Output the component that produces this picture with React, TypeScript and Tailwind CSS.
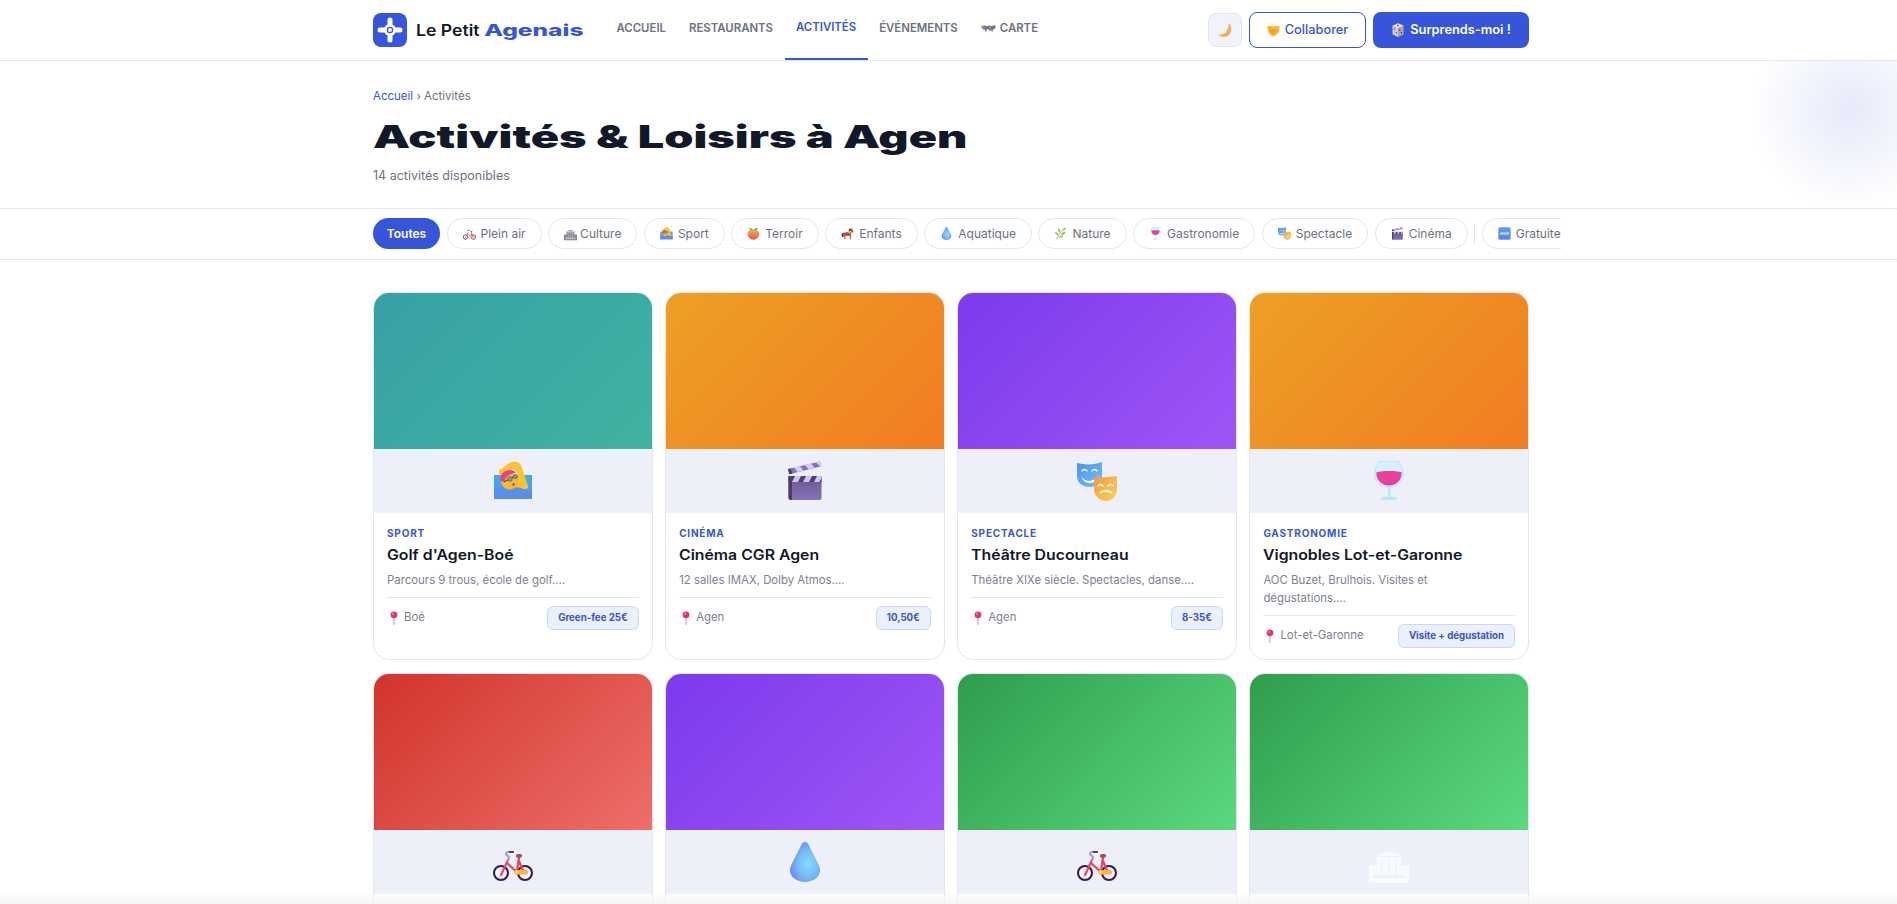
import React from "react";

const BLUE = "#3755db";

function Swimmer({ s }: { s: number }) {
  return (
    <svg width={s} height={s} viewBox="0 0 40 40">
      <defs>
        <linearGradient id="swW" x1="0" y1="0" x2="0" y2="1">
          <stop offset="0" stopColor="#3fa9f5" />
          <stop offset="1" stopColor="#4f9bf0" />
        </linearGradient>
      </defs>
      <rect x="1" y="14" width="38" height="24" fill="url(#swW)" />
      <path d="M6 9c1-1 3-1 5-3 4-4 8-6 13-5 3 1 4 3 5 6l6 18c1 2-1 3-2 3H22l3-8c0-5-1-11-5-12-3 0-6 3-8 6-2 1-5 0-6-1z" fill="#f9c22e" />
      <circle cx="16.500" cy="20" r="8.500" fill="#f8b92c" />
      <path d="M8 20c-2-6 3-11 9-11 3 0 5 1 6 3-5 0-10 3-12 9z" fill="#e6447e" />
      <path d="M11 21l13-7" stroke="#46566e" strokeWidth="1.400" />
      <circle cx="17" cy="18" r="2.200" fill="#8ba0b8" stroke="#46566e" strokeWidth="0.800" />
      <circle cx="22.300" cy="15.500" r="1.900" fill="#8ba0b8" stroke="#46566e" strokeWidth="0.800" />
      <circle cx="20.500" cy="23.500" r="1.200" fill="#c9303a" />
      <path d="M1 28c3-2 6-2 9 0s7 2 10 0 7-2 10 0 6 2 9 0v10H1z" fill="#5a8eea" />
    </svg>
  );
}

function Clapper({ s }: { s: number }) {
  return (
    <svg width={s} height={s} viewBox="0 0 40 40">
      <defs>
        <linearGradient id="clB" x1="0" y1="0" x2="0" y2="1">
          <stop offset="0" stopColor="#6a5688" />
          <stop offset="1" stopColor="#8573bd" />
        </linearGradient>
      </defs>
      <rect x="3.500" y="15" width="33" height="24" rx="2.500" fill="url(#clB)" />
      <path d="M3.500 15H7v24H6a2.500 2.500 0 0 1-2.500-2.500z" fill="#4c3a6a" />
      <rect x="3.500" y="15" width="33" height="6" fill="#4f3f72" />
      <path d="M10 15h6l-3 6H7zM21 15h6l-3 6h-6zM32 15h4.500v2l-2 4H29z" fill="#cfc4f5" />
      <path d="M3 8l32-7.500 1.300 4.700-32 8z" fill="#8b6cbd" />
      <path d="M9 6.600l6-1.400 3.500 4.200-6 1.500zM20 4l6-1.400 3.500 4.200-6 1.500zM31 1.400l4-.900 1.300 4.700-1.300.3z" fill="#d8cdf5" />
      <path d="M3 8l1.300 5.200L7.500 12.400 5.500 7.400z" fill="#4c3a6a" />
    </svg>
  );
}

function Masks({ s }: { s: number }) {
  return (
    <svg width={s} height={s} viewBox="0 0 40 40">
      <defs>
        <linearGradient id="mkB" x1="0" y1="0" x2="1" y2="1">
          <stop offset="0" stopColor="#4c8ff5" />
          <stop offset="1" stopColor="#6fc4fb" />
        </linearGradient>
        <linearGradient id="mkO" x1="0" y1="0" x2="1" y2="1">
          <stop offset="0" stopColor="#f29a45" />
          <stop offset="1" stopColor="#fcd24f" />
        </linearGradient>
      </defs>
      <path d="M0 2c8 2 17 2 25-1v14c0 7-5 11-12 11S0 22 0 15z" fill="url(#mkB)" />
      <path d="M3 13c3 9 15 9 19 0-2 5-3 9-9 9s-8-4-10-9z" fill="#fff" />
      <path d="M5 10c1-2 4-2 5 0M15 10c1-2 4-2 5 0" stroke="#fff" strokeWidth="1.400" fill="none" strokeLinecap="round" />
      <path d="M17 16c7 1 15 0 23-1v13c0 7-5 12-11 12s-12-5-12-12z" fill="url(#mkO)" />
      <path d="M22 33c2-5 11-6 14 0-4-2.500-10-2.500-14 0z" fill="#fff" />
      <path d="M21 25c1-2 4-2 5 0M31 25c1-2 4-2 5 0" stroke="#fff" strokeWidth="1.400" fill="none" strokeLinecap="round" />
    </svg>
  );
}

function Wine({ s }: { s: number }) {
  return (
    <svg width={s} height={s} viewBox="0 0 40 40">
      <path d="M11 0h18c4 5 5 9 5 13 0 8-6 13-14 13S6 21 6 13c0-4 1-8 5-13z" fill="#d5f0ff" stroke="#aee0f8" strokeWidth="1" />
      <path d="M7.500 11c7-1.500 18-1.500 25 0 1 8-5.500 13.500-12.500 13.500S6.500 19 7.500 11z" fill="#e93f9f" />
      <path d="M11 21c5 3.500 13 3.500 18 0-4 4-14 4-18 0z" fill="#8e3b9b" />
      <rect x="19" y="26" width="2.500" height="10" fill="#b9e4fa" />
      <rect x="12" y="36" width="16" height="3" rx="1.500" fill="#b9e4fa" />
    </svg>
  );
}

function Bike({ s }: { s: number }) {
  return (
    <svg width={s} height={s} viewBox="0 0 40 40">
      <circle cx="8" cy="31" r="7" fill="#fbeefa" stroke="#2d1a52" strokeWidth="2" />
      <circle cx="32" cy="31" r="7" fill="#fbeefa" stroke="#2d1a52" strokeWidth="2" />
      <path d="M8 33l7-15M14 21l10 9 2-15M26 19l5 12" stroke="#e8455b" strokeWidth="2.200" fill="none" strokeLinecap="round" />
      <path d="M15 18l1-2c1-2-3-2-3-4s1-2 3-2h3" stroke="#a49ac8" strokeWidth="2" fill="none" strokeLinecap="round" />
      <rect x="16" y="9" width="5" height="1.800" fill="#4a3b5c" />
      <rect x="23" y="12" width="6" height="3.500" rx="1.500" fill="#8a5c45" />
      <rect x="21" y="28" width="14" height="4.500" rx="2.200" fill="#fbb72e" />
      <circle cx="23.500" cy="30" r="1.300" fill="#fdeaa0" />
    </svg>
  );
}

function Drop({ s }: { s: number }) {
  return (
    <svg width={s} height={s} viewBox="0 0 40 40">
      <defs>
        <radialGradient id="drG" cx="0.6" cy="0.55" r="0.6">
          <stop offset="0" stopColor="#86dcff" />
          <stop offset="0.6" stopColor="#74b8f5" />
          <stop offset="1" stopColor="#7087f5" />
        </radialGradient>
      </defs>
      <path d="M20 0c2 0 3 1.500 4 3.500l9 18c1.500 3 2 5 2 7C35 35 28 40 20 40S5 35 5 28.500c0-2 .5-4 2-7l9-18C17 1.500 18 0 20 0z" fill="url(#drG)" />
    </svg>
  );
}

function Temple({ s, c, d }: { s: number; c: string; d: string }) {
  return (
    <svg width={s} height={s} viewBox="0 0 40 40" className="overflow-visible">
      <rect x="0" y="23" width="40" height="18" fill={c} />
      <path d="M20 9L35 14H5z" fill={c} />
      <rect x="5" y="14" width="30" height="1" fill={d} />
      <rect x="7" y="15" width="26" height="2" fill={c} />
      <rect x="8" y="17" width="24" height="17" fill={c} />
      <path d="M13 17v16M20 17v16M27 17v16" stroke={d} strokeWidth="1.200" />
      <path d="M7 33h26l3 3H3z" fill={d} />
    </svg>
  );
}

function Peach({ s }: { s: number }) {
  return (
    <svg width={s} height={s} viewBox="0 0 40 40">
      <defs>
        <linearGradient id="pcG" x1="0" y1="0" x2="0" y2="1">
          <stop offset="0" stopColor="#fbb14b" />
          <stop offset="1" stopColor="#ee4f5a" />
        </linearGradient>
      </defs>
      <path d="M20 10c10-5 18 2 18 11 0 10-8 18-18 18S2 31 2 21c0-9 8-16 18-11z" fill="url(#pcG)" />
      <path d="M20 10C18 5 12 2 6 3c2 6 8 9 14 7zM20 10c2-5 8-8 14-7-2 6-8 9-14 7z" fill="#6fb13c" />
    </svg>
  );
}

function Horse({ s }: { s: number }) {
  return (
    <svg width={s} height={s} viewBox="0 0 40 40">
      <path d="M8 18h20l3-6c-1-4 0-8 2-9l6 11-2 3-5-1-1 10v12h-4V28H14v10h-4V28l-4 4-3-2c1-3 0-9 5-12z" fill="#b26a36" />
      <path d="M28 4c-3 1-4 5-5 10l8-2c-1-3 0-6-3-8z" fill="#5a3320" />
      <path d="M3 30c-2-4-2-9 4-13l2 3c-3 3-3 6-2 9z" fill="#5a3320" />
      <rect x="13" y="16" width="11" height="8" rx="2" fill="#d6384a" />
    </svg>
  );
}

function Herb({ s }: { s: number }) {
  return (
    <svg width={s} height={s} viewBox="0 0 40 40">
      <path d="M8 38C12 26 20 14 32 4" stroke="#8fb553" strokeWidth="2.500" fill="none" />
      <path d="M13 27C6 26 3 21 3 14c6 1 11 6 10 13zM19 18c-6-2-8-7-7-14 6 2 9 7 7 14zM21 24c1-7 7-10 15-9-2 7-8 11-15 9zM27 12c0-5 3-9 10-11 0 6-4 11-10 11zM15 32c2-5 7-7 14-5-3 6-8 8-14 5z" fill="#a5c763" />
    </svg>
  );
}

function Free({ s }: { s: number }) {
  return (
    <svg width={s} height={s} viewBox="0 0 40 40">
      <defs>
        <linearGradient id="frG" x1="0" y1="0" x2="0" y2="1">
          <stop offset="0" stopColor="#4ca4f5" />
          <stop offset="1" stopColor="#5d7fe8" />
        </linearGradient>
      </defs>
      <rect x="1" y="1" width="38" height="38" rx="5" fill="url(#frG)" />
      <rect x="6" y="16" width="28" height="8" fill="#c4dcfb" opacity="0.8" />
    </svg>
  );
}

function Moon({ s }: { s: number }) {
  return (
    <svg width={s} height={s} viewBox="0 0 40 40">
      <defs>
        <linearGradient id="mnG" x1="0" y1="0" x2="1" y2="1">
          <stop offset="0" stopColor="#fbd65c" />
          <stop offset="1" stopColor="#ef9b52" />
        </linearGradient>
      </defs>
      <path d="M30 2c8 10 8 24-2 32-8 6-18 4-26-3 10 1 18-1 22-8 3-7 5-14 6-21z" fill="url(#mnG)" />
    </svg>
  );
}

function Handshake({ s }: { s: number }) {
  return (
    <svg width={s} height={s} viewBox="0 0 40 40">
      <path d="M1 8c6-4 13-4 19 0 6-4 13-4 19 0l-1 13C34 30 27 36 20 39 13 36 6 30 2 21z" fill="#f8bd33" />
      <path d="M8 14l10 2 7-2 8 6-11 10-6 2-8-10z" fill="#eda32a" />
    </svg>
  );
}

function Dice({ s }: { s: number }) {
  return (
    <svg width={s} height={s} viewBox="0 0 40 40">
      <path d="M20 1l15 6v25l-15 7-15-7V7z" fill="#e8e3ee" />
      <path d="M20 14l15-7v25l-15 7z" fill="#a9a3b5" />
      <path d="M20 14L5 7v25l15 7z" fill="#cfcad8" />
      <circle cx="20" cy="7" r="2.500" fill="#d23a56" />
      <circle cx="10" cy="17" r="2" fill="#55506a" />
      <circle cx="15" cy="28" r="2" fill="#55506a" />
      <circle cx="25" cy="20" r="2" fill="#2f2b3c" />
      <circle cx="30" cy="28" r="2" fill="#2f2b3c" />
    </svg>
  );
}

function MapIcon({ s }: { s: number }) {
  return (
    <svg width={s} height={s} viewBox="0 0 40 40">
      <path d="M0 11l10-2 5 2 6-2 6 2 6-2 7 1-4 9-4 1-2 7-3-5-4 2-3-5-5 1-2 8-4-10-6-2z" fill="#6f7584" />
      <path d="M0 11l10-2v12l-6-2zM21 9l6 2v11l-6-2z" fill="#8b909c" />
    </svg>
  );
}

function Pin({ s }: { s: number }) {
  return (
    <svg width={s} height={s} viewBox="0 0 14 14">
      <rect x="6.300" y="5" width="1.400" height="9" rx="0.700" fill="#b9bcc9" />
      <circle cx="7" cy="3.800" r="3.400" fill="#e5337a" />
      <circle cx="6" cy="2.800" r="1" fill="#f786b1" />
    </svg>
  );
}

function Logo() {
  return (
    <svg width="34" height="34" viewBox="0 0 34 34" className="shrink-0">
      <rect width="34" height="34" rx="8" fill={BLUE} />
      <path d="M17 7v20M7 17h20" stroke="#fff" strokeWidth="5" strokeLinecap="round" />
      <circle cx="17" cy="17" r="6" fill="#fff" />
      <circle cx="17" cy="17" r="2.600" fill="none" stroke={BLUE} strokeWidth="1.300" />
    </svg>
  );
}

const chips: [React.ReactNode, string][] = [
  [<Bike s={13} />, "Plein air"],
  [<Temple s={13} c="#8a8d98" d="#d4d6dd" />, "Culture"],
  [<Swimmer s={13} />, "Sport"],
  [<Peach s={13} />, "Terroir"],
  [<Horse s={13} />, "Enfants"],
  [<Drop s={13} />, "Aquatique"],
  [<Herb s={13} />, "Nature"],
  [<Wine s={13} />, "Gastronomie"],
  [<Masks s={13} />, "Spectacle"],
  [<Clapper s={13} />, "Cinéma"],
];

type C = { g: string; i: React.ReactNode; cat?: string; title?: string; desc?: string; place?: string; price?: string };

const teal = "bg-[linear-gradient(135deg,#37a1a6,#3fb3a0)]";
const orange = "bg-[linear-gradient(135deg,#eda025,#f17c22)]";
const purple = "bg-[linear-gradient(135deg,#7c3aed,#a055f6)]";
const red = "bg-[linear-gradient(135deg,#d1342c,#ee6e6a)]";
const green = "bg-[linear-gradient(135deg,#2f9d4c,#5bd97f)]";

const cards: C[] = [
  { g: teal, i: <Swimmer s={40} />, cat: "Sport", title: "Golf d'Agen-Boé", desc: "Parcours 9 trous, école de golf....", place: "Boé", price: "Green-fee 25€" },
  { g: orange, i: <Clapper s={40} />, cat: "Cinéma", title: "Cinéma CGR Agen", desc: "12 salles IMAX, Dolby Atmos....", place: "Agen", price: "10,50€" },
  { g: purple, i: <Masks s={40} />, cat: "Spectacle", title: "Théâtre Ducourneau", desc: "Théâtre XIXe siècle. Spectacles, danse....", place: "Agen", price: "8-35€" },
  { g: orange, i: <Wine s={40} />, cat: "Gastronomie", title: "Vignobles Lot-et-Garonne", desc: "AOC Buzet, Brulhois. Visites et dégustations....", place: "Lot-et-Garonne", price: "Visite + dégustation" },
  { g: red, i: <Bike s={40} /> },
  { g: purple, i: <Drop s={40} /> },
  { g: green, i: <Bike s={40} /> },
  { g: green, i: <Temple s={40} c="#f9fafd" d="#edf0f9" /> },
];

function Card({ c }: { c: C }) {
  return (
    <div className="rounded-[16px] border border-[#dfe5f3] bg-white overflow-hidden flex flex-col">
      <div className={`h-[156px] ${c.g}`} />
      <div className="h-[64px] bg-[#edf0f9] flex items-center justify-center">{c.i}</div>
      {c.title && (
        <div className="px-[13px] pt-[14px] pb-[11px]">
          <div className="text-[10px] leading-[12px] font-bold uppercase tracking-[0.08em] text-[#3755db]">{c.cat}</div>
          <div className="mt-[6px] text-[14px] leading-[20px] font-semibold text-[#111827] whitespace-nowrap origin-left scale-x-[1.13]">{c.title}</div>
          <p className="mt-[6px] mb-[8px] pr-[10px] text-[11.400px] leading-[18px] text-[#7b8190]">{c.desc}</p>
          <div className="border-t border-[#dfe5f3] pt-[8px] flex items-center justify-between">
            <div className="flex items-center gap-[3px] text-[11.400px] text-[#7b8190]">
              <Pin s={14} />
              <span>{c.place}</span>
            </div>
            <span className="h-[24px] px-[10px] flex items-center rounded-[6px] border border-[#c9d6f6] bg-[#ebf0fd] text-[9.700px] font-bold text-[#3755db] whitespace-nowrap">
              {c.price}
            </span>
          </div>
        </div>
      )}
      {!c.title && <div className="h-[140px]" />}
    </div>
  );
}

export default function App() {
  const nav = ["ACCUEIL", "RESTAURANTS", "ACTIVITÉS", "ÉVÉNEMENTS"];
  return (
    <div className="h-screen overflow-hidden bg-white relative font-['Inter','Liberation_Sans',sans-serif]">
      <div className="w-[1902px]">
        <header className="h-[61px] border-b border-[#dfe5f3] bg-white relative z-10">
          <div className="w-[1156px] mx-auto h-[60px] flex items-center">
            <div className="flex items-center gap-[9px] w-[232px]">
              <Logo />
              <div className="text-[16px] font-semibold text-[#111827] whitespace-nowrap origin-left scale-x-[1.1]">
                Le Petit <span className="inline-block origin-left scale-x-[1.39] font-extrabold text-[#3755db]">Agenais</span>
              </div>
            </div>
            <nav className="flex h-full">
              {nav.map((n) => (
                <a
                  key={n}
                  className={`h-full px-[11.500px] pb-[2px] flex items-center text-[11.400px] font-semibold ${
                    n === "ACTIVITÉS" ? "text-[#3755db] border-b-2 border-[#3755db] pb-[0px]" : "text-[#6b7280]"
                  }`}
                >
                  {n}
                </a>
              ))}
              <a className="h-full px-[11.500px] pb-[2px] flex items-center gap-[4px] text-[11.400px] font-semibold text-[#6b7280]">
                <MapIcon s={15} />
                CARTE
              </a>
            </nav>
            <div className="ml-auto flex items-center gap-[7px]">
              <button className="w-[34px] h-[34px] rounded-[8px] border border-[#dfe5f3] bg-[#f0f3fb] flex items-center justify-center">
                <Moon s={16} />
              </button>
              <button className="h-[36px] w-[117px] rounded-[8px] border-[1.500px] border-[#3755db] bg-white text-[#3755db] text-[12.800px] font-medium flex items-center justify-center gap-[5px]">
                <Handshake s={13} />
                Collaborer
              </button>
              <button className="h-[36px] w-[156px] rounded-[8px] bg-[#3755db] text-white text-[12.800px] font-semibold flex items-center justify-center gap-[5px]">
                <Dice s={14} />
                Surprends-moi !
              </button>
            </div>
          </div>
        </header>

        <section className="relative overflow-hidden h-[148px] border-b border-[#dfe5f3]">
          <div className="absolute right-[-48px] top-[-51px] w-[200px] h-[200px] bg-[radial-gradient(circle,#e6eafa_0%,transparent_70%)]" />
          <div className="w-[1156px] mx-auto pt-[26px]">
            <div className="text-[11.500px] leading-[18px] text-[#6b7280]">
              <span className="text-[#3755db]">Accueil</span> › Activités
            </div>
            <h1 className="mt-[11px] text-[31px] leading-[42px] font-black text-[#111827] whitespace-nowrap origin-left scale-x-[1.51]">
              Activités &amp; Loisirs à Agen
            </h1>
            <p className="mt-[8px] text-[12.500px] leading-[20px] text-[#6b7280]">14 activités disponibles</p>
          </div>
        </section>

        <div className="border-b border-[#dfe5f3] h-[51px]">
          <div className="w-[1156px] mx-auto">
            <div className="w-[1188px] overflow-hidden flex items-center gap-[6.500px] pt-[9px]">
              <button className="h-[31px] w-[67px] shrink-0 rounded-full bg-[#3755db] text-white text-[12px] font-semibold">Toutes</button>
              {chips.map(([ic, t]) => (
                <button
                  key={t}
                  className={`h-[31px] shrink-0 rounded-full border border-[#dfe5f3] bg-white px-[15px] flex items-center text-[12px] text-[#6b7280] ${
                    t === "Culture" ? "gap-[3px]" : "gap-[5px]"
                  }`}
                >
                  {ic}
                  {t}
                </button>
              ))}
              <div className="w-px h-[20px] bg-[#dfe5f3] shrink-0" />
              <button className="h-[31px] shrink-0 rounded-full border border-[#dfe5f3] bg-white px-[15px] flex items-center gap-[5px] text-[12px] text-[#6b7280]">
                <Free s={13} />
                Gratuites
              </button>
            </div>
          </div>
        </div>

        <main className="w-[1156px] mx-auto pt-[32px] grid grid-cols-4 gap-x-[12.500px] gap-y-[13px]">
          {cards.map((c, i) => (
            <Card key={i} c={c} />
          ))}
        </main>
      </div>
      <div className="fixed left-0 right-0 bottom-0 h-[14px] bg-gradient-to-b from-transparent to-[#f4f4f5]/80 pointer-events-none" />
    </div>
  );
}
